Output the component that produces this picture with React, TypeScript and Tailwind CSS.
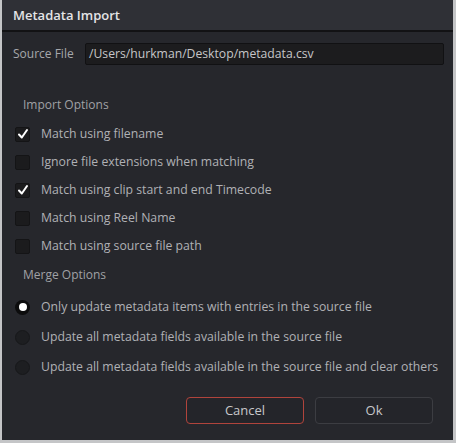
import React from 'react';

const IMPORT_OPTIONS = [
  { label: 'Match using filename', checked: true },
  { label: 'Ignore file extensions when matching', checked: false },
  { label: 'Match using clip start and end Timecode', checked: true },
  { label: 'Match using Reel Name', checked: false },
  { label: 'Match using source file path', checked: false },
];

const MERGE_OPTIONS = [
  'Only update metadata items with entries in the source file',
  'Update all metadata fields available in the source file',
  'Update all metadata fields available in the source file and clear others',
];

function Checkbox({ checked }: { checked: boolean }) {
  return (
    <div className="w-[15px] h-[15px] rounded-[2px] bg-[#1b1b1d] border border-[#141416] flex items-center justify-center">
      {checked && (
        <svg width="12" height="12" viewBox="0 0 12 12">
          <path d="M2 6.5 L4.8 9.5 L10 2" fill="none" stroke="#ffffff" strokeWidth="2" strokeLinecap="round" strokeLinejoin="round" />
        </svg>
      )}
    </div>
  );
}

function Radio({ selected }: { selected: boolean }) {
  if (selected) {
    return (
      <div className="w-[15px] h-[15px] rounded-full bg-[#0c0c0d] flex items-center justify-center">
        <div className="w-[8px] h-[8px] rounded-full bg-white" />
      </div>
    );
  }
  return <div className="w-[15px] h-[15px] rounded-full bg-[#1d1e21] border border-[#17181a]" />;
}

export default function App() {
  return (
    <div className="w-[456px] h-[443px] bg-[#c4c5c7] pl-[2px] pr-[3px] pb-[3px]" style={{ fontFamily: '"Open Sans", sans-serif' }}>
      <div className="w-full h-full bg-[#26272c] flex flex-col">
        {/* Title bar */}
        <div className="h-[32px] bg-[#2f3036] border-b-2 border-[#121214] flex items-center pl-[11px] shrink-0">
          <span className="text-[13px] font-semibold text-[#e4e4e6] leading-none">Metadata Import</span>
        </div>

        <div className="pt-[11px] pl-[11px] pr-[9px]">
          <div className="flex items-center h-[22px]">
            <span className="w-[72px] text-[12px] text-[#a6a7ab]">Source File</span>
            <div className="flex-1 h-[22px] bg-[#1c1c1e] border border-[#111113] rounded-[2px] flex items-center px-[3px]">
              <span className="text-[12.2px] text-[#c6c6c8]">/Users/hurkman/Desktop/metadata.csv</span>
            </div>
          </div>
        </div>

        <div className="mt-[32px] pl-[21px] h-[16px] flex items-center">
          <span className="text-[12px] text-[#a0a1a5]">Import Options</span>
        </div>
        <div className="mt-[7px] pl-[13px]">
          {IMPORT_OPTIONS.map((o) => (
            <div key={o.label} className="h-[28px] flex items-center gap-[11px]">
              <Checkbox checked={o.checked} />
              <span className="text-[12.25px] text-[#b0b1b5]">{o.label}</span>
            </div>
          ))}
        </div>

        <div className="mt-[7px] pl-[21px] h-[16px] flex items-center">
          <span className="text-[12px] text-[#a0a1a5]">Merge Options</span>
        </div>
        <div className="mt-[9px] pl-[13px]">
          {MERGE_OPTIONS.map((o, i) => (
            <div key={o} className="h-[30px] flex items-center gap-[11px]">
              <Radio selected={i === 0} />
              <span className="text-[12.25px] text-[#b0b1b5]">{o}</span>
            </div>
          ))}
        </div>

        <div className="mt-[15px] flex justify-end gap-[11px] pr-[20px]">
          <button className="w-[118px] h-[27px] rounded-[4px] border border-[#b0443c] bg-[#24252a] text-[13px] text-[#c8c8ca]">
            Cancel
          </button>
          <button className="w-[118px] h-[27px] rounded-[4px] border border-[#3c3d42] bg-[#24252a] text-[13px] text-[#c8c8ca]">
            Ok
          </button>
        </div>
      </div>
    </div>
  );
}
